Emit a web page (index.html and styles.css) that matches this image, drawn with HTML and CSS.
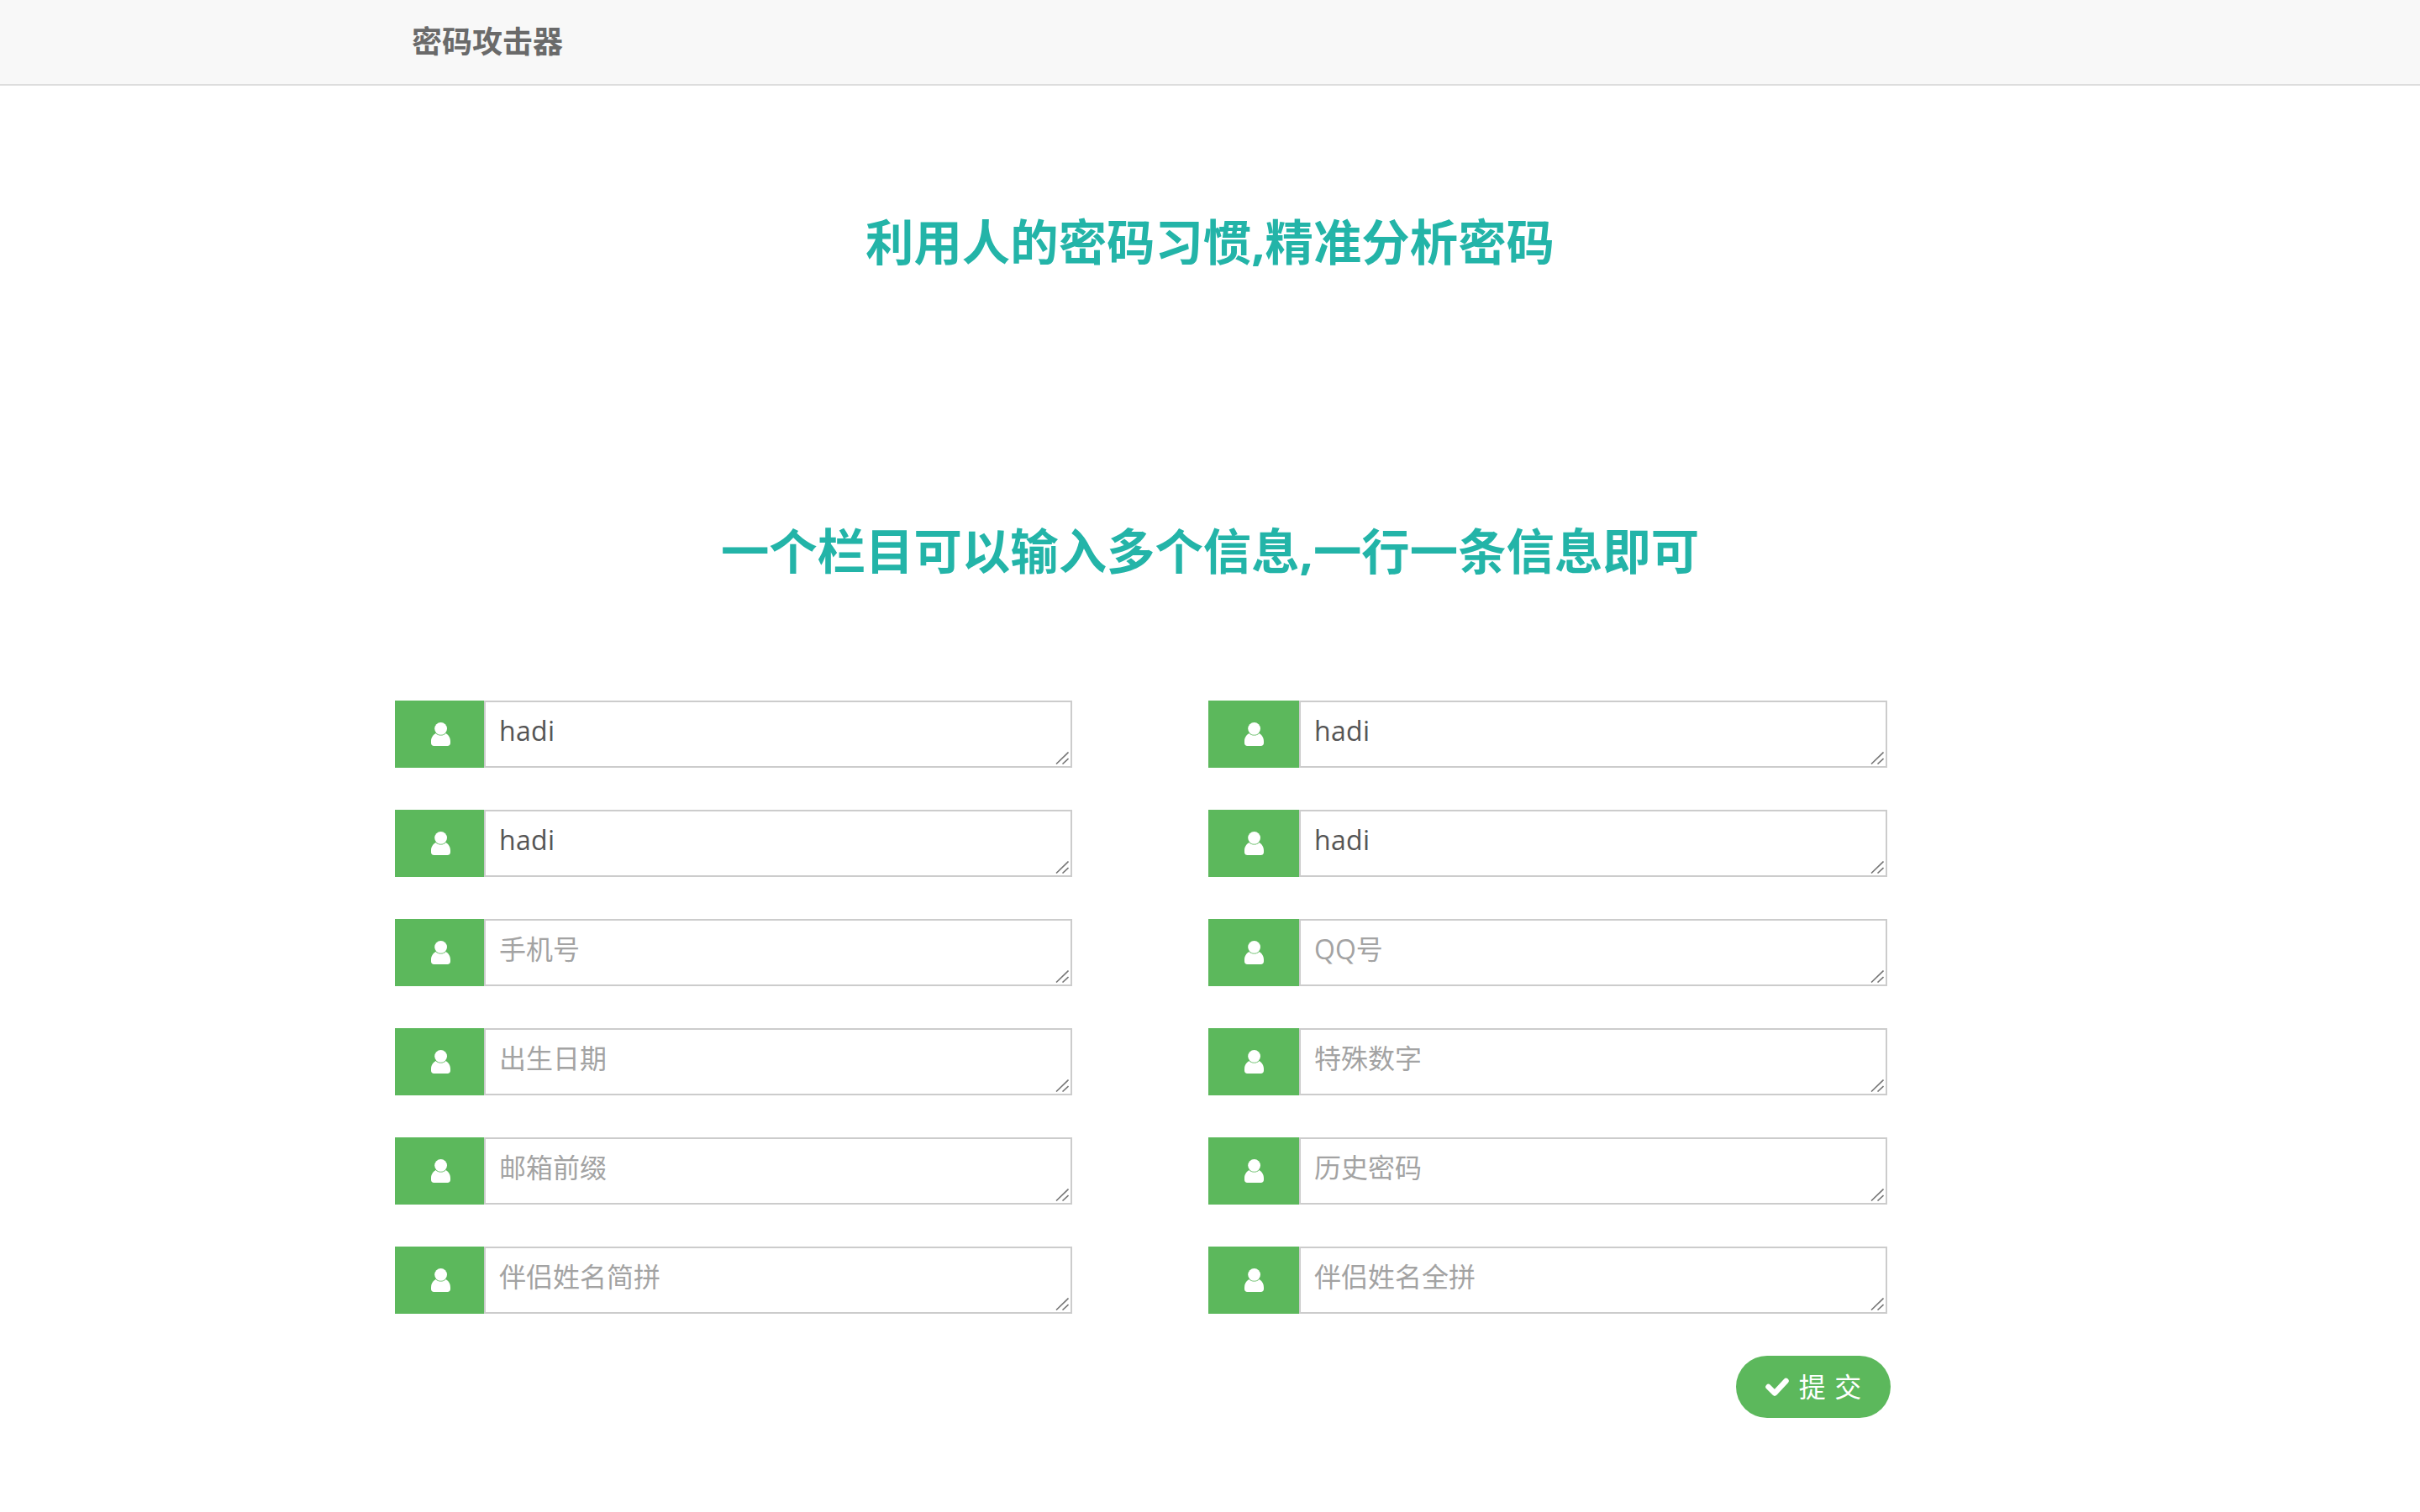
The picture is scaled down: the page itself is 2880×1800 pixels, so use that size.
FILE: index.html
```html
<!DOCTYPE html>
<html lang="zh-CN">
<head>
<meta charset="utf-8">
<title>密码攻击器</title>
<link rel="stylesheet" href="styles.css">
</head>
<body>
<svg class="defs" xmlns="http://www.w3.org/2000/svg">
  <symbol id="user" viewBox="0 0 23 28">
    <circle cx="11.6" cy="7.4" r="7.4"/>
    <path d="M0 22.5C0 18 2.6 14.6 5.6 13C7.2 14.9 9.3 15.6 11.6 15.6C13.9 15.6 16 14.9 17.5 13C20.5 14.6 23 18 23 22.5V24.6C23 26.8 21.6 28 19.6 28H3.4C1.4 28 0 26.8 0 24.6Z"/>
  </symbol>
  <symbol id="grip" viewBox="0 0 16 15">
    <path d="M15.5 0.5L1 14.5M15.5 8L8.5 14.5"/>
  </symbol>
</svg>
<header class="navbar"><span class="brand">密码攻击器</span></header>
<main class="page">
  <h1 class="headline">利用人的密码习惯,精准分析密码</h1>
  <h2 class="headline second">一个栏目可以输入多个信息,一行一条信息即可</h2>
  <form class="form">
    <div class="grid">
      <div class="field"><span class="addon"><svg class="user-icon"><use href="#user"/></svg></span><textarea class="box">hadi</textarea><svg class="grip"><use href="#grip"/></svg></div>
      <div class="field wide"><span class="addon"><svg class="user-icon"><use href="#user"/></svg></span><textarea class="box">hadi</textarea><svg class="grip"><use href="#grip"/></svg></div>
      <div class="field"><span class="addon"><svg class="user-icon"><use href="#user"/></svg></span><textarea class="box">hadi</textarea><svg class="grip"><use href="#grip"/></svg></div>
      <div class="field wide"><span class="addon"><svg class="user-icon"><use href="#user"/></svg></span><textarea class="box">hadi</textarea><svg class="grip"><use href="#grip"/></svg></div>
      <div class="field"><span class="addon"><svg class="user-icon"><use href="#user"/></svg></span><textarea class="box" placeholder="手机号"></textarea><svg class="grip"><use href="#grip"/></svg></div>
      <div class="field wide"><span class="addon"><svg class="user-icon"><use href="#user"/></svg></span><textarea class="box" placeholder="QQ号"></textarea><svg class="grip"><use href="#grip"/></svg></div>
      <div class="field"><span class="addon"><svg class="user-icon"><use href="#user"/></svg></span><textarea class="box" placeholder="出生日期"></textarea><svg class="grip"><use href="#grip"/></svg></div>
      <div class="field wide"><span class="addon"><svg class="user-icon"><use href="#user"/></svg></span><textarea class="box" placeholder="特殊数字"></textarea><svg class="grip"><use href="#grip"/></svg></div>
      <div class="field"><span class="addon"><svg class="user-icon"><use href="#user"/></svg></span><textarea class="box" placeholder="邮箱前缀"></textarea><svg class="grip"><use href="#grip"/></svg></div>
      <div class="field wide"><span class="addon"><svg class="user-icon"><use href="#user"/></svg></span><textarea class="box" placeholder="历史密码"></textarea><svg class="grip"><use href="#grip"/></svg></div>
      <div class="field"><span class="addon"><svg class="user-icon"><use href="#user"/></svg></span><textarea class="box" placeholder="伴侣姓名简拼"></textarea><svg class="grip"><use href="#grip"/></svg></div>
      <div class="field wide"><span class="addon"><svg class="user-icon"><use href="#user"/></svg></span><textarea class="box" placeholder="伴侣姓名全拼"></textarea><svg class="grip"><use href="#grip"/></svg></div>
    </div>
    <div class="actions">
      <button type="button" class="submit">
        <svg class="check" viewBox="0 0 28 22"><path d="M3.5 11L11 18.5L24.5 4" /></svg>
        <span class="submit-label">提 交</span>
      </button>
    </div>
  </form>
</main>
</body>
</html>
```

FILE: styles.css
```css
* { box-sizing: border-box; }
html, body { margin: 0; padding: 0; background: #fff; }
body { font-family: "Open Sans", "Noto Sans CJK SC", sans-serif; color: #555; }
.defs { display: none; }
.navbar {
  height: 102px;
  background: #f8f8f8;
  border-bottom: 2px solid #ddd;
  padding: 0 0 6px 490px;
  display: flex;
  align-items: center;
}
.brand {
  font-size: 36px;
  font-weight: 700;
  color: #6a6a6a;
  font-family: "Noto Sans CJK SC", sans-serif;
}
.page { width: 1780px; margin-left: 470px; padding-top: 146px; }
.headline {
  margin: 0 0 0 -470px;
  width: 2880px;
  text-align: center;
  font-size: 57.4px;
  line-height: 80px;
  font-weight: 700;
  color: #23b4a8;
  font-family: "Open Sans", "Noto Sans CJK SC", sans-serif;
}
.second { margin-top: 288px; }
.form { margin-top: 138px; }
.grid {
  display: grid;
  grid-template-columns: 806px 808px;
  column-gap: 162px;
  row-gap: 50px;
}
.field { position: relative; display: flex; height: 80px; }
.addon {
  flex: 0 0 106px;
  background: #5cb85c;
  display: flex;
  align-items: center;
  justify-content: center;
  padding-left: 2px;
}
.wide .addon { flex-basis: 108px; padding-left: 0; }
.user-icon { width: 23px; height: 28px; fill: #fff; }
.box {
  flex: 1 1 auto;
  height: 80px;
  min-height: 80px;
  border: 2px solid #ccc;
  border-radius: 0;
  padding: 12px 16px;
  margin: 0;
  font-family: "Open Sans", "Noto Sans CJK SC", sans-serif;
  font-size: 32px;
  line-height: 44px;
  letter-spacing: 0.3px;
  color: #555;
  background: #fff;
  outline: none;
  resize: none;
}
.box::placeholder { color: #a3a3a3; opacity: 1; letter-spacing: 0; }
.grip {
  position: absolute;
  right: 4px;
  bottom: 4px;
  width: 16px;
  height: 15px;
  fill: none;
  stroke: #777;
  stroke-width: 1.6;
  pointer-events: none;
}
.actions { display: flex; justify-content: flex-end; margin-top: 50px; }
.submit {
  width: 184px;
  height: 74px;
  border: 0;
  border-radius: 37px;
  background: #5cb85c;
  color: #fff;
  font-family: "Open Sans", "Noto Sans CJK SC", sans-serif;
  font-size: 32px;
  display: flex;
  align-items: center;
  justify-content: center;
  gap: 12px;
  padding: 0;
}
.submit-label { word-spacing: 2px; margin-bottom: 4px; }
.check { width: 28px; height: 22px; fill: none; stroke: #fff; stroke-width: 6.5; stroke-linecap: round; stroke-linejoin: round; }
```
